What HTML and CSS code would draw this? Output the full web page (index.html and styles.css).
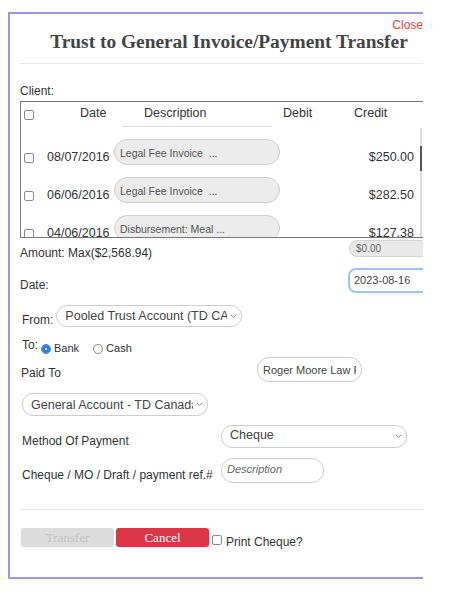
FILE: index.html
```html
<!DOCTYPE html>
<html lang="en">
<head>
    <meta charset="UTF-8">
    <meta name="viewport" content="width=device-width, initial-scale=1.0">
    <title>Trust to General Invoice/Payment Transfer</title>
    <link rel="stylesheet" href="styles.css">
</head>
<body>

<div class="frame">
    <div class="close-row"><span class="close">Close</span></div>
    <h1 class="title">Trust to General Invoice/Payment Transfer</h1>
    <div class="rule"></div>

    <div class="body">
        <div class="client">Client:</div>

        <div class="grid-box">
            <div class="grid-head">
                <div class="head-cells">
                    <div class="th-check"><input type="checkbox" class="check"></div>
                    <div class="th-date">Date</div>
                    <div class="th-desc">Description</div>
                    <div class="th-debit">Debit</div>
                    <div class="th-credit">Credit</div>
                </div>
                <div class="head-line"></div>
            </div>
            <div class="grid-rows">
                <div class="row-list">
                    <div class="row">
                        <div class="td-check"><input type="checkbox" class="check"></div>
                        <div class="td-date">08/07/2016</div>
                        <div class="pill">Legal Fee Invoice&nbsp; ...</div>
                        <div class="td-credit">$250.00</div>
                    </div>
                    <div class="row">
                        <div class="td-check"><input type="checkbox" class="check"></div>
                        <div class="td-date">06/06/2016</div>
                        <div class="pill">Legal Fee Invoice&nbsp; ...</div>
                        <div class="td-credit">$282.50</div>
                    </div>
                    <div class="row">
                        <div class="td-check"><input type="checkbox" class="check"></div>
                        <div class="td-date">04/06/2016</div>
                        <div class="pill">Disbursement: Meal ...</div>
                        <div class="td-credit">$127.38</div>
                    </div>
                </div>
                <div class="scroll-track"><div class="scroll-thumb"></div></div>
            </div>
        </div>

        <div class="amount-row">
            <div class="amount-label">Amount: Max($2,568.94)</div>
            <div class="amount-input">$0.00</div>
        </div>

        <div class="date-row">
            <div class="date-label">Date:</div>
            <div class="date-input">2023-08-16</div>
        </div>

        <div class="from-row">
            <div class="lbl">From:</div>
            <div class="select from-select">
                <span class="sel-text">Pooled Trust Account (TD CAD)</span>
                <svg class="chev" width="7" height="5" viewBox="0 0 7 5"><path d="M1 1l2.5 2.5L6 1" fill="none" stroke="#888" stroke-width="1"/></svg>
            </div>
        </div>

        <div class="to-row">
            <div class="lbl to-label">To:</div>
            <input type="radio" name="to" class="radio" checked>
            <span class="radio-text">Bank</span>
            <input type="radio" name="to" class="radio cash-radio">
            <span class="radio-text">Cash</span>
        </div>

        <div class="paid-row">
            <div class="lbl paid-label">Paid To</div>
            <div class="text-input paid-input"><span class="sel-text">Roger Moore Law Firm</span></div>
        </div>

        <div class="select account-select">
            <span class="sel-text">General Account - TD Canada Trust</span>
            <svg class="chev" width="7" height="5" viewBox="0 0 7 5"><path d="M1 1l2.5 2.5L6 1" fill="none" stroke="#888" stroke-width="1"/></svg>
        </div>

        <div class="method-row">
            <div class="lbl wide-label">Method Of Payment</div>
            <div class="select method-select">
                <span class="sel-text">Cheque</span>
                <svg class="chev" width="7" height="5" viewBox="0 0 7 5"><path d="M1 1l2.5 2.5L6 1" fill="none" stroke="#888" stroke-width="1"/></svg>
            </div>
        </div>

        <div class="ref-row">
            <div class="lbl wide-label ref-label">Cheque / MO / Draft / payment ref.#</div>
            <div class="text-input ref-input"><span class="placeholder">Description</span></div>
        </div>

        <div class="rule bottom-rule"></div>

        <div class="button-row">
            <button class="btn btn-transfer" disabled>Transfer</button>
            <button class="btn btn-cancel">Cancel</button>
            <input type="checkbox" class="check print-check">
            <span class="print-text">Print Cheque?</span>
        </div>
    </div>
</div>

</body>
</html>
```

FILE: styles.css
```css
/* page */
body {
    margin: 0;
    font-family: "Liberation Sans", Arial, sans-serif;
    font-size: 12px;
    color: #333;
    background-color: #fff;
}
.frame {
    width: 413px;
    margin: 12px 0 0 8px;
    border: 2px solid #9898f2;
    border-right: none;
    padding-bottom: 30px;
    overflow: hidden;
}
.close-row {
    padding-top: 4px;
    height: 14px;
    line-height: 14px;
    text-align: right;
}
.close {
    color: #e8463d;
    font-size: 12px;
}
.title {
    margin: -1px 0 0 10px;
    width: 418px;
    text-align: center;
    font: bold 19.4px/22px "Liberation Serif", "Times New Roman", serif;
    color: #444;
}
.rule {
    margin: 10px 0 0 10px;
    width: 418px;
    height: 1px;
    background-color: #e8e8e8;
}
.body {
    margin-left: 10px;
    width: 418px;
}
.client {
    margin-top: 20px;
    line-height: 14px;
}

/* checkbox and radio */
.check {
    appearance: none;
    -webkit-appearance: none;
    width: 10px;
    height: 10px;
    margin: 0;
    border: 1px solid #8a8a8a;
    border-radius: 2px;
    background-color: #fff;
    box-sizing: border-box;
}
.radio {
    appearance: none;
    -webkit-appearance: none;
    width: 10px;
    height: 10px;
    margin: 0 0 1px 0;
    border: 1px solid #8a8a8a;
    border-radius: 50%;
    background-color: #fff;
    box-sizing: border-box;
}
.radio:checked {
    border-color: #2a7de1;
    box-shadow: inset 0 0 0 3px #2a7de1;
}

/* transactions box */
.grid-box {
    margin-top: 3px;
    width: 405px;
    height: 137px;
    box-sizing: border-box;
    border: 1px solid #777;
    display: flex;
    flex-direction: column;
    overflow: hidden;
}
.grid-head {
    height: 26px;
    padding-top: 4px;
    box-sizing: border-box;
    flex-shrink: 0;
}
.head-cells {
    display: flex;
    align-items: center;
    font-size: 12.5px;
    line-height: 15px;
}
.th-check {
    width: 56px;
    padding-left: 3px;
    display: flex;
    padding-top: 2px;
}
.th-date { width: 64px; }
.th-desc { width: 139px; }
.th-debit { width: 71px; }
.head-line {
    margin: 5px 0 0 101px;
    width: 150px;
    height: 1px;
    background-color: #ddd;
}
.grid-rows {
    flex: 1;
    display: flex;
    overflow: hidden;
}
.row-list {
    flex: 1;
    padding-top: 11px;
    display: flex;
    flex-direction: column;
    gap: 12px;
}
.row {
    height: 26px;
    display: flex;
    align-items: flex-end;
    flex-shrink: 0;
    font-size: 12.5px;
    line-height: 15px;
}
.td-check {
    width: 23px;
    padding-left: 3px;
    display: flex;
    margin-bottom: 2px;
}
.td-date { width: 67px; }
.pill {
    width: 166px;
    height: 26px;
    box-sizing: border-box;
    border: 1px solid #cfcfcf;
    border-radius: 13px;
    background-color: #ececec;
    padding: 6px 0 0 5px;
    font-size: 10.5px;
    line-height: 14px;
    color: #555;
    white-space: nowrap;
}
.td-credit {
    flex: 1;
    text-align: right;
    padding-right: 6px;
}
.scroll-track {
    width: 2px;
    margin-right: 2px;
    background-color: #dcdcdc;
}
.scroll-thumb {
    margin-top: 18px;
    height: 25px;
    background-color: #555;
}

/* form rows */
.lbl {
    line-height: 14px;
    padding-left: 2px;
    white-space: nowrap;
}
.amount-row {
    margin-top: 2px;
    display: flex;
}
.amount-label {
    margin-top: 6px;
    line-height: 14px;
}
.amount-input {
    margin-left: auto;
    width: 89px;
    height: 17px;
    box-sizing: border-box;
    border: 1px solid #d6d6d6;
    border-radius: 8px;
    background-color: #e9e9e9;
    padding-left: 6px;
    font-size: 10px;
    line-height: 15px;
    color: #666;
}
.date-row {
    margin-top: 8px;
    display: flex;
}
.date-label {
    margin-top: 10px;
    line-height: 14px;
}
.date-input {
    margin-left: auto;
    width: 90px;
    height: 25px;
    box-sizing: border-box;
    border: 2px solid #9cc4f4;
    border-radius: 8px;
    padding-left: 4px;
    font-size: 11px;
    line-height: 21px;
    color: #444;
}
.select {
    display: flex;
    align-items: center;
    box-sizing: border-box;
    border: 1px solid #cdcdcd;
    border-radius: 11px;
    background-color: #fff;
    padding-left: 8px;
    font-size: 12.5px;
    color: #444;
}
.sel-text {
    flex: 1;
    overflow: hidden;
    white-space: nowrap;
}
.chev {
    margin: 0 4px 0 3px;
    flex-shrink: 0;
}
.from-row {
    margin-top: 12px;
    display: flex;
    align-items: flex-end;
}
.from-select {
    margin-left: 3px;
    width: 186px;
    height: 22px;
}
.to-row {
    margin-top: 11px;
    display: flex;
    align-items: flex-end;
}
.to-label {
    margin-bottom: 3px;
    margin-right: 3px;
}
.radio-text {
    margin-left: 3px;
    font-size: 11px;
    line-height: 13px;
}
.cash-radio {
    margin-left: 14px;
}
.paid-row {
    margin-top: 2px;
    display: flex;
    align-items: flex-end;
}
.paid-label {
    width: 236px;
    padding-left: 1px;
    margin-bottom: 2px;
}
.text-input {
    display: flex;
    align-items: center;
    box-sizing: border-box;
    border: 1px solid #cdcdcd;
    border-radius: 12px;
    background-color: #fff;
    padding: 0 5px;
    font-size: 11px;
    color: #444;
}
.paid-input {
    width: 105px;
    height: 25px;
}
.account-select {
    margin: 11px 0 0 2px;
    width: 186px;
    height: 23px;
}
.method-row {
    margin-top: 9px;
    display: flex;
    align-items: flex-end;
}
.wide-label {
    width: 199px;
}
.method-select {
    width: 186px;
    height: 23px;
    align-items: flex-start;
    padding-top: 2px;
}
.method-select .chev {
    margin-top: 6px;
}
.ref-row {
    margin-top: 10px;
    display: flex;
    align-items: flex-end;
}
.ref-label {
    margin-bottom: 1px;
}
.ref-input {
    width: 103px;
    height: 25px;
    align-items: flex-start;
    padding-top: 4px;
}
.placeholder {
    font-style: italic;
    color: #666;
}
.bottom-rule {
    margin: 26px 0 0 0;
    width: 418px;
}

/* buttons */
.button-row {
    margin-top: 18px;
    display: flex;
    align-items: flex-end;
}
.btn {
    width: 93px;
    height: 19px;
    padding: 0;
    border: none;
    border-radius: 3px;
    font: 13px/19px "Liberation Serif", "Times New Roman", serif;
}
.btn-transfer {
    margin-left: 1px;
    background-color: #dcdcdc;
    color: #c4c4c4;
}
.btn-cancel {
    margin-left: 2px;
    background-color: #dc3545;
    color: #fff;
    cursor: pointer;
}
.print-check {
    margin: 0 0 2px 3px;
}
.print-text {
    margin-left: 4px;
    line-height: 14px;
    margin-bottom: -2px;
}
```
